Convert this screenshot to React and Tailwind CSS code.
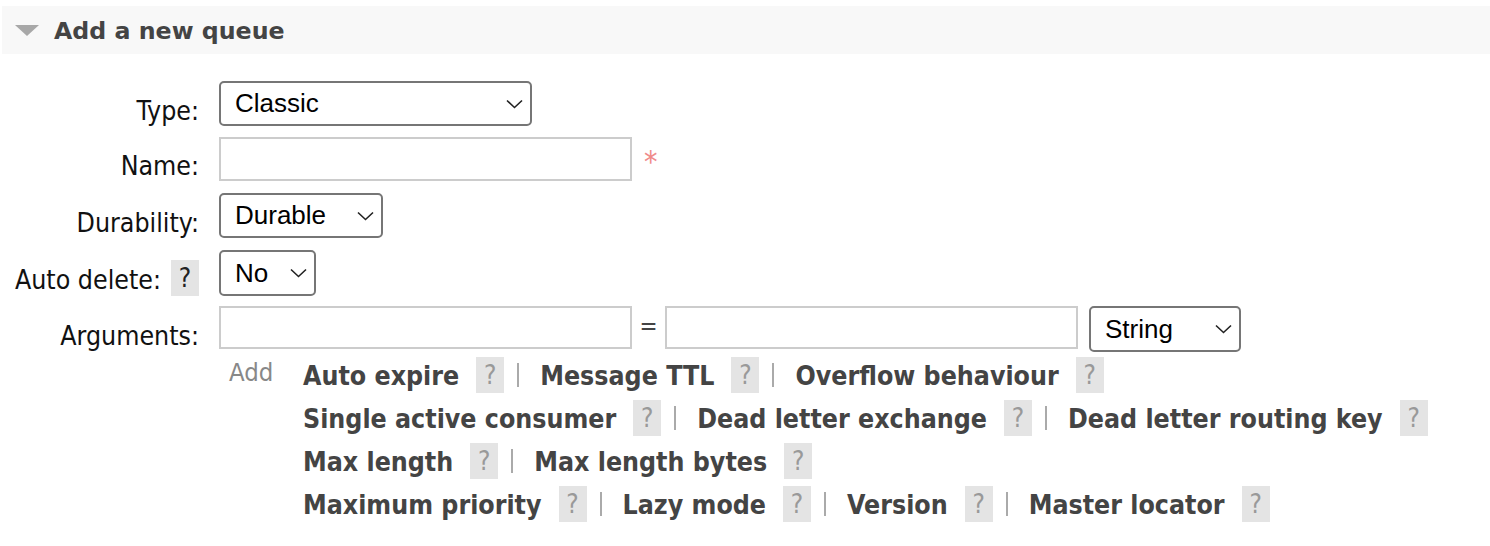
import { useState } from 'react'

const labelFont = { fontFamily: '"DejaVu Sans Condensed", "DejaVu Sans", sans-serif' }
const ctrlFont = { fontFamily: '"Liberation Sans", Arial, sans-serif' }

function Chevron() {
  return (
    <svg width="17" height="10" viewBox="0 0 17 10" className="absolute right-[9px] top-1/2 -translate-y-1/2 pointer-events-none">
      <path d="M1 1.5 L8.5 8.5 L16 1.5" fill="none" stroke="#222" strokeWidth="1.6" />
    </svg>
  )
}

function Select({ value, options, width, height = 'h-[45px]' }) {
  const [val, setVal] = useState(value)
  return (
    <div className={`relative ${width} ${height}`}>
      <select
        value={val}
        onChange={(e) => setVal(e.target.value)}
        style={ctrlFont}
        className="appearance-none w-full h-full border-2 border-[#767676] rounded-[5px] bg-white pl-[14px] text-[26px] text-black outline-none"
      >
        {options.map((o) => (
          <option key={o}>{o}</option>
        ))}
      </select>
      <Chevron />
    </div>
  )
}

function TextInput({ className = '' }) {
  return <input type="text" className={`w-[413px] border-2 border-[#cccccc] bg-white outline-none ${className}`} />
}

function Help({ dark }) {
  return (
    <span
      className={`inline-flex items-center justify-center w-[28px] h-[36px] bg-[#e4e4e4] text-[26px] leading-none font-normal ${dark ? 'text-[#222]' : 'text-[#999]'}`}
    >
      ?
    </span>
  )
}

function Row({ label, help, className, children }) {
  return (
    <div className={`flex ${className}`}>
      <div className="w-[199px] flex items-center justify-end text-[26.5px] leading-none text-[#111] pt-[15px]" style={labelFont}>
        <span>{label}</span>
        {help && (
          <span className="ml-[10px] -mt-[6px]">
            <Help dark />
          </span>
        )}
      </div>
      <div className="ml-[20px] flex items-start">{children}</div>
    </div>
  )
}

const argRows = [
  ['Auto expire', 'Message TTL', 'Overflow behaviour'],
  ['Single active consumer', 'Dead letter exchange', 'Dead letter routing key'],
  ['Max length', 'Max length bytes'],
  ['Maximum priority', 'Lazy mode', 'Version', 'Master locator'],
]

export default function App() {
  return (
    <div className="w-[1490px] h-[546px] bg-white overflow-hidden" style={labelFont}>
      <div className="ml-[2px] mt-[6px] h-[48px] bg-[#f8f8f8] flex items-center">
        <svg width="24" height="12" viewBox="0 0 24 12" className="ml-[13px] mt-[2px]">
          <path d="M0 0 H24 L12 11 Z" fill="#a8a8a8" />
        </svg>
        <h2
          className="ml-[15px] mt-[4px] text-[23.7px] leading-none font-bold text-[#444]"
          style={{ fontFamily: '"DejaVu Sans", Verdana, sans-serif' }}
        >
          Add a new queue
        </h2>
      </div>

      <div className="mt-[27px]">
        <Row label="Type:">
          <Select value="Classic" options={['Classic', 'Quorum', 'Stream']} width="w-[313px]" />
        </Row>

        <Row label="Name:" className="mt-[11px]">
          <TextInput className="h-[44px]" />
          <span className="ml-[12px] mt-[10px] text-[30px] leading-none text-[#f08a8a]">*</span>
        </Row>

        <Row label="Durability:" className="mt-[12px]">
          <Select value="Durable" options={['Durable', 'Transient']} width="w-[164px]" />
        </Row>

        <Row label="Auto delete:" help className="mt-[12px]">
          <Select value="No" options={['No', 'Yes']} width="w-[97px]" height="h-[46px]" />
        </Row>

        <Row label="Arguments:" className="mt-[10px]">
          <TextInput className="h-[43px]" />
          <span className="w-[33px] text-center text-[24px] leading-none text-[#444] mt-[8px]">=</span>
          <TextInput className="h-[43px]" />
          <div className="ml-[11px]">
            <Select value="String" options={['String', 'Number', 'Boolean', 'List']} width="w-[152px]" height="h-[46px]" />
          </div>
        </Row>

        <div className="flex mt-[5px]">
          <div className="w-[229px]" />
          <div className="w-[74px] text-[25.5px] leading-none text-[#888] pt-[3px]">Add</div>
          <div className="flex flex-col gap-[7px]">
            {argRows.map((row, i) => (
              <div key={i} className="flex items-center h-[36px]">
                {row.map((name, j) => (
                  <div key={name} className="flex items-center">
                    {j > 0 && <span className="w-[2px] h-[24px] bg-[#aaa] ml-[13px] mr-[21px]" />}
                    <span className="text-[26.5px] leading-none font-bold text-[#444] cursor-pointer pt-[3px]">{name}</span>
                    <span className="ml-[17px]">
                      <Help />
                    </span>
                  </div>
                ))}
              </div>
            ))}
          </div>
        </div>
      </div>
    </div>
  )
}
